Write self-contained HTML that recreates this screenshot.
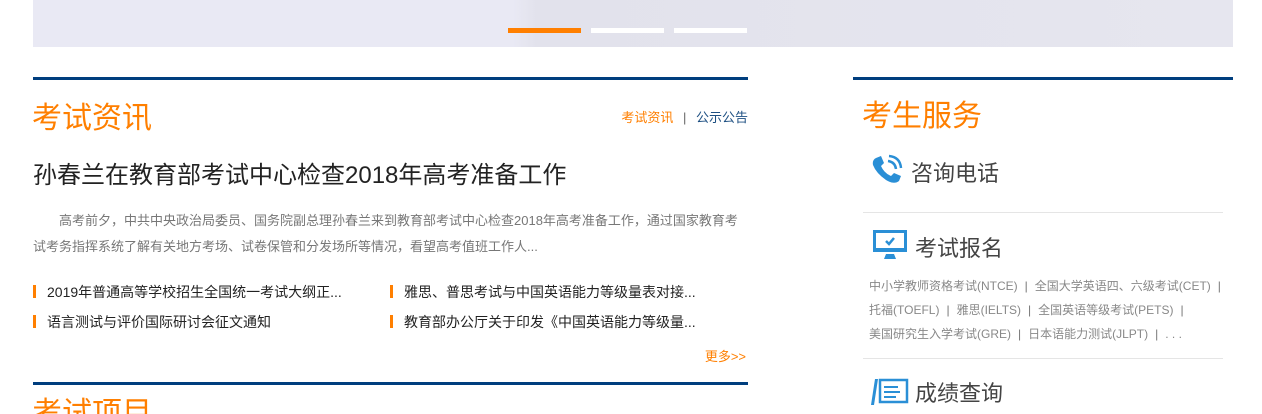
<!DOCTYPE html>
<html><head><meta charset="utf-8"><style>
*{margin:0;padding:0;box-sizing:border-box}
html,body{width:1262px;height:414px;overflow:hidden}
body{background:#fff;font-family:"Liberation Sans","Noto Sans CJK SC",sans-serif;position:relative}
.a{position:absolute;white-space:nowrap}
.bar{position:absolute;width:3px;height:13px;background:#ff7f00}
.li{font-size:14px;color:#222}
.sm{font-size:12px;color:#888}
.p{color:#777;margin:0 7px}
</style></head><body>
<div class="a" style="left:33px;top:0;width:1200px;height:47px;background:linear-gradient(90deg,#e9e9f4 0%,#e9e9f4 40%,#e2e2ec 42%,#e6e6ef 100%)"></div>
<div class="a" style="left:508px;top:28px;width:73px;height:5px;background:#ff7f00"></div>
<div class="a" style="left:591px;top:28px;width:73px;height:5px;background:#fff"></div>
<div class="a" style="left:674px;top:28px;width:73px;height:5px;background:#fff"></div>

<div class="a" style="left:33px;top:77px;width:715px;height:3px;background:#003e7e"></div>
<div class="a" style="left:32px;top:93px;font-size:30px;color:#ff7f00">考试资讯</div>
<div class="a" style="right:514px;top:107px;font-size:13px;color:#ff7f00">考试资讯 <span style="color:#666;margin:0 6px">|</span> <span style="color:#1d4f82">公示公告</span></div>
<div class="a" style="left:33px;top:155px;font-size:24px;color:#222">孙春兰在教育部考试中心检查2018年高考准备工作</div>
<div class="a" style="left:33px;top:208px;width:715px;font-size:13px;color:#777;line-height:26px;white-space:normal;text-indent:26px">高考前夕，中共中央政治局委员、国务院副总理孙春兰来到教育部考试中心检查2018年高考准备工作，通过国家教育考试考务指挥系统了解有关地方考场、试卷保管和分发场所等情况，看望高考值班工作人...</div>
<div class="bar" style="left:33px;top:285px"></div><div class="a li" style="left:47px;top:282px">2019年普通高等学校招生全国统一考试大纲正...</div>
<div class="bar" style="left:390px;top:285px"></div><div class="a li" style="left:404px;top:282px">雅思、普思考试与中国英语能力等级量表对接...</div>
<div class="bar" style="left:33px;top:315px"></div><div class="a li" style="left:47px;top:312px">语言测试与评价国际研讨会征文通知</div>
<div class="bar" style="left:390px;top:315px"></div><div class="a li" style="left:404px;top:312px">教育部办公厅关于印发《中国英语能力等级量...</div>
<div class="a" style="right:516px;top:346px;font-size:13px;color:#ff7f00">更多&gt;&gt;</div>
<div class="a" style="left:33px;top:382px;width:715px;height:3px;background:#003e7e"></div>
<div class="a" style="left:32px;top:396px;height:18px;overflow:hidden;font-size:30px;line-height:36px;color:#ff7f00">考试项目</div>

<div class="a" style="left:853px;top:77px;width:380px;height:3px;background:#003e7e"></div>
<div class="a" style="left:862px;top:91px;font-size:30px;color:#ff7f00">考生服务</div>
<svg class="a" style="left:870px;top:153px" width="34" height="34" viewBox="0 0 34 34"><path d="M6 5 L11 3 L14 10 L11 13 Q14 20 21 23 L24 20 L31 23 L29 28 Q24 32 16 27 Q6 20 3 12 Q2 7 6 5Z" fill="#2a8fd6"/><path d="M18 8 Q25 9 26 16" stroke="#2a8fd6" stroke-width="2.5" fill="none"/><path d="M19 3 Q30 4 31 15" stroke="#2a8fd6" stroke-width="2.5" fill="none"/></svg>
<div class="a" style="left:911px;top:156px;font-size:22px;color:#444">咨询电话</div>
<div class="a" style="left:863px;top:212px;width:360px;height:1px;background:#e5e5e5"></div>
<svg class="a" style="left:873px;top:230px" width="34" height="30" viewBox="0 0 34 30"><rect x="1.5" y="1.5" width="31" height="19" fill="none" stroke="#2a8fd6" stroke-width="3"/><rect x="0" y="18" width="34" height="4" fill="#2a8fd6"/><path d="M13 24 L21 24 L23 29 L11 29Z" fill="#2a8fd6"/><path d="M13 11 L16 14 L21 8" stroke="#2a8fd6" stroke-width="2.5" fill="none"/></svg>
<div class="a" style="left:915px;top:231px;font-size:22px;color:#444">考试报名</div>
<div class="a sm" style="left:869px;top:277px">中小学教师资格考试(NTCE)<span class="p">|</span>全国大学英语四、六级考试(CET)<span class="p">|</span></div>
<div class="a sm" style="left:869px;top:301px">托福(TOEFL)<span class="p">|</span>雅思(IELTS)<span class="p">|</span>全国英语等级考试(PETS)<span class="p">|</span></div>
<div class="a sm" style="left:869px;top:325px">美国研究生入学考试(GRE)<span class="p">|</span>日本语能力测试(JLPT)<span class="p">|</span>. . .</div>
<div class="a" style="left:863px;top:358px;width:360px;height:1px;background:#e5e5e5"></div>
<svg class="a" style="left:870px;top:377px" width="40" height="30" viewBox="0 0 40 30"><path d="M5 2 L8 2 L4 28 L1 28Z" fill="#2a8fd6"/><rect x="10" y="3" width="27" height="22" fill="none" stroke="#2a8fd6" stroke-width="2.5"/><path d="M14 10H28M14 15H30M14 20H26" stroke="#2a8fd6" stroke-width="2"/></svg>
<div class="a" style="left:915px;top:376px;font-size:22px;color:#444">成绩查询</div>
</body></html>
